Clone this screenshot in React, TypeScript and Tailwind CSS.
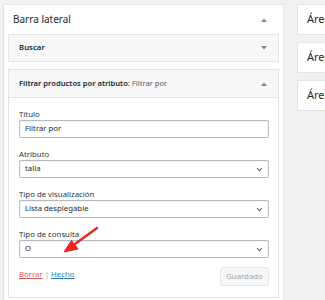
import React from "react";

const Tri = ({ up }: { up?: boolean }) => (
  <svg width="6" height="4" viewBox="0 0 6 4" className="shrink-0">
    {up ? <path d="M0 4 L3 0.5 L6 4 Z" fill="#82878c" /> : <path d="M0 0 L3 3.5 L6 0 Z" fill="#82878c" />}
  </svg>
);

const Chevron = () => (
  <svg width="7" height="5" viewBox="0 0 7 5" className="shrink-0">
    <path d="M1 1.2 L3.5 3.7 L6 1.2" stroke="#6b7176" strokeWidth="1.1" fill="none" />
  </svg>
);

const Field = ({ label, value, select }: { label: string; value: string; select?: boolean }) => (
  <div className="flex flex-col">
    <div className="h-[12px] leading-[12px] text-[7.8px] text-[#2c3338]">{label}</div>
    <div className="h-[18px] border border-[#b4b9be] rounded-[2px] bg-white flex items-center justify-between pl-[5px] pr-[5px] shadow-[inset_0_1px_1px_rgba(0,0,0,0.05)]">
      <span className="text-[7.8px] text-[#23282d] leading-none">{value}</span>
      {select && <Chevron />}
    </div>
  </div>
);

export default function App() {
  return (
    <div
      className="relative w-[325px] h-[300px] overflow-hidden bg-[#f1f1f1] flex items-start pt-[4px] pl-[3px]"
      style={{ fontFamily: '"Noto Sans", "Open Sans", sans-serif' }}
    >
      <div className="w-[281px] h-[310px] shrink-0 bg-white border border-[#e2e4e7] flex flex-col">
        <div className="h-[29px] flex items-center justify-between pl-[9px] pr-[16px]">
          <span className="text-[10px] text-[#23282d]">Barra lateral</span>
          <Tri up />
        </div>
        <div className="mx-[4px] flex flex-col gap-[7px]">
          <div className="h-[28px] border border-[#e2e4e7] bg-[#f7f7f7] flex items-center justify-between pl-[10px] pr-[11px]">
            <span className="text-[7.8px] font-semibold text-[#23282d]">Buscar</span>
            <Tri />
          </div>
          <div className="border border-[#e2e4e7] bg-white h-[229px]">
            <div className="h-[28px] border-b border-[#e2e4e7] bg-[#f7f7f7] flex items-center justify-between pl-[10px] pr-[11px]">
              <span className="text-[7.6px] text-[#23282d] whitespace-nowrap">
                <span className="font-semibold">Filtrar productos por atributo</span>
                <span className="text-[#555d66]">: Filtrar por</span>
              </span>
              <Tri up />
            </div>
            <div className="pl-[10px] pr-[9px] pt-[10px] flex flex-col gap-[10px]">
              <Field label="Título" value="Filtrar por" />
              <Field label="Atributo" value="talla" select />
              <Field label="Tipo de visualización" value="Lista desplegable" select />
              <Field label="Tipo de consulta" value="O" select />
            </div>
            <div className="pl-[10px] pr-[9px] mt-[9px] flex items-start justify-between">
              <span className="text-[7.8px] leading-[12px] mt-[1px]">
                <span className="text-[#e05a5a] underline">Borrar</span>
                <span className="text-[#a0a5aa]"> | </span>
                <span className="text-[#2a7fc0] underline">Hecho</span>
              </span>
              <div className="h-[19px] w-[49px] border border-[#e2e4e7] rounded-[3px] bg-[#f7f7f7] flex items-center justify-center text-[7.8px] text-[#a0a5aa]">
                Guardado
              </div>
            </div>
          </div>
        </div>
      </div>
      <div className="ml-[13px] flex flex-col gap-[7px] w-[60px] shrink-0">
        {[0, 1, 2].map((i) => (
          <div key={i} className="h-[31px] border border-[#e2e4e7] bg-white flex items-center pl-[9px] overflow-hidden">
            <span className="text-[11px] text-[#23282d] whitespace-nowrap">Área</span>
          </div>
        ))}
      </div>
      <svg className="absolute left-0 top-0 pointer-events-none" width="325" height="300" viewBox="0 0 325 300">
        <path d="M97 228 L75 244" stroke="#e8261f" strokeWidth="2.4" strokeLinecap="round" />
        <path d="M64 252 L71.5 240.5 L78 249 Z" fill="#e8261f" stroke="#e8261f" strokeWidth="1" strokeLinejoin="round" />
      </svg>
    </div>
  );
}
